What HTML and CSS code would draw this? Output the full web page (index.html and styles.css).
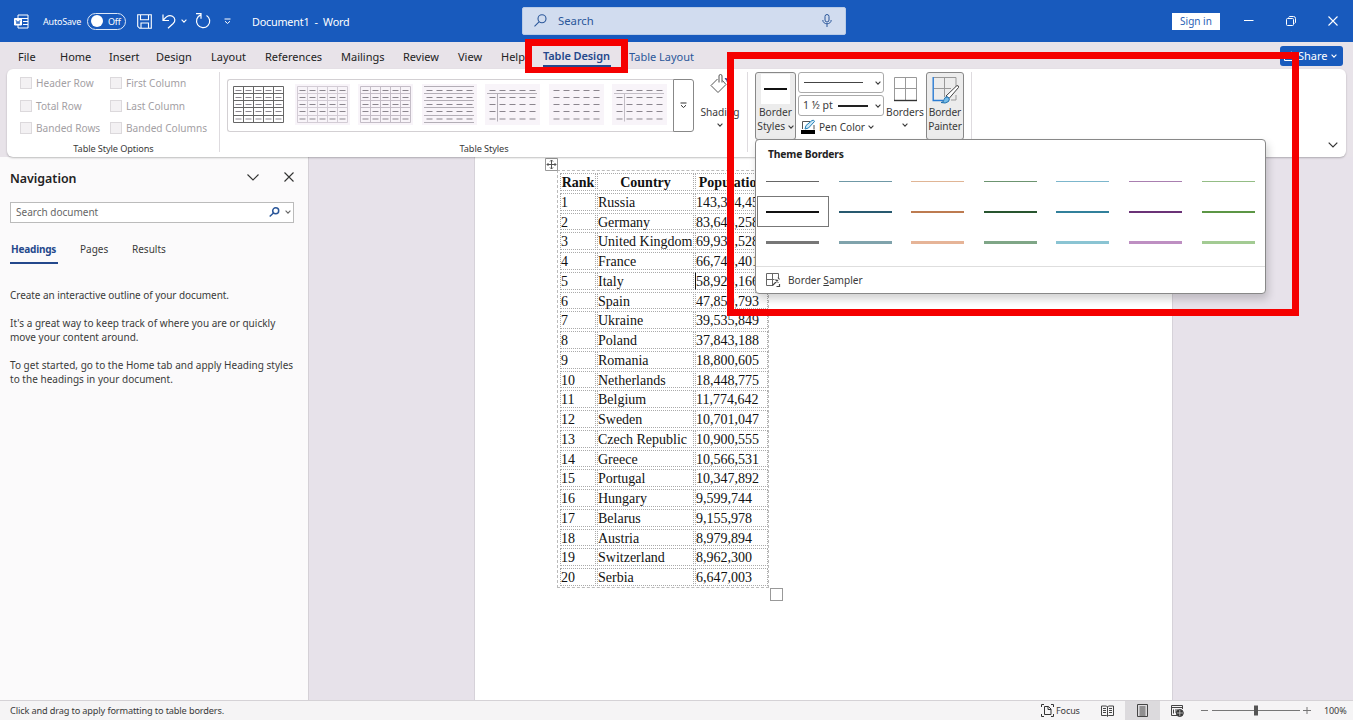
FILE: index.html
```html
<!DOCTYPE html>
<html lang="en">
<head>
  <meta charset="UTF-8" />
  <meta name="viewport" content="width=device-width, initial-scale=1" />
  <title>Document1 - Word</title>
  <link rel="stylesheet" href="styles.css">
</head>
<body>
  <!-- shared symbols -->
  <svg class="defs" width="0" height="0">
    <symbol id="chev" viewBox="0 0 6 4"><path d="M.6.7 3 3.1 5.4.7" fill="none" stroke="currentColor" stroke-width="1.1"/></symbol>
    <symbol id="dashes" viewBox="0 0 51 37">
      <path d="M2.5 4.5h46M2.5 11.5h46M2.5 18.5h46M2.5 25.5h46M2.5 33h46" fill="none" stroke="#8b868e" stroke-dasharray="6 4"/>
    </symbol>
    <symbol id="grid" viewBox="0 0 51 37">
      <path d="M.5.5h50v36H.5zM10.5.5v36M20.5.5v36M30.5.5v36M40.5.5v36M.5 7.5h50M.5 14.5h50M.5 21.5h50M.5 29.5h50" fill="none" stroke="currentColor"/>
    </symbol>
  </svg>

  <header class="titlebar">
    <svg class="word" width="15" height="15" viewBox="0 0 15 15" fill="none" stroke="#fff"><path d="M4 4V1h10v13H4v-3M4 4.5h10M9 7.5h5M9 10.5h5"/><path d="M.5 4.5h7V11h-7z" fill="#fff"/><path d="M2 6l1 4 1-3 1 3 1-4" stroke="#185abd" stroke-width=".8"/></svg>
    <span class="autosave">AutoSave</span>
    <span class="toggle"><i></i>Off</span>
    <svg class="save" width="15" height="15" viewBox="0 0 15 15" fill="none" stroke="#fff" stroke-width="1.1"><path d="M.7.7h13.6v13.6H2.7l-2-2zM3.5.7v5h8v-5M4 14V9h7.5v5"/></svg>
    <svg class="undo" width="14" height="15" viewBox="0 0 14 15" fill="none" stroke="#fff" stroke-width="1.2"><path d="M1 .5v6h6M1.3 6.2C4 2.5 7.5.8 10.500 2.300c3 1.600 3 5 .7 7.200L6 14.200"/></svg>
    <svg class="caret" width="6" height="4"><use href="#chev"/></svg>
    <svg class="redo" width="16" height="16" viewBox="0 0 16 16" fill="none" stroke="#fff" stroke-width="1.2"><path d="M1 .7h5v5M5.800 1.900a6.600 6.600 0 1 0 5.700.5"/></svg>
    <svg class="more" width="7" height="7" viewBox="0 0 7 7" fill="none" stroke="#fff"><path d="M.5 1h6M1 3.2l2.5 2.3L6 3.2"/></svg>
    <span class="doc-name">Document1&nbsp; -&nbsp; Word</span>
    <div class="search">
      <svg width="13" height="13" viewBox="0 0 13 13" fill="none" stroke="#2b579a" stroke-width="1.1"><circle cx="8" cy="4.8" r="4"/><path d="M5 7.8.5 12.3"/></svg>
      <span>Search</span>
      <svg class="mic" width="10" height="13" viewBox="0 0 10 13" fill="none" stroke="#2b579a"><rect x="3" y=".5" width="4" height="7.5" rx="2"/><path d="M.8 6c0 5 8.4 5 8.4 0M5 10v3"/></svg>
    </div>
    <button class="signin">Sign in</button>
    <svg class="win-min" width="10" height="10" viewBox="0 0 10 10"><path d="M0 4.5h9.5" stroke="#fff"/></svg>
    <svg class="win-max" width="10" height="10" viewBox="0 0 10 10" fill="none" stroke="#fff"><rect x=".5" y="2.5" width="7" height="7" rx="1"/><path d="M2.5 1.5Q3 .5 4 .5h3.5q2 0 2 2V6q0 1-1 1.5"/></svg>
    <svg class="win-close" width="10" height="10" viewBox="0 0 10 10"><path d="M.5.5l9 9M9.5.5l-9 9" stroke="#fff" stroke-width="1.1"/></svg>
  </header>

  <nav class="tabs">
    <a class="t-file">File</a>
    <a class="t-home">Home</a>
    <a class="t-insert">Insert</a>
    <a class="t-design">Design</a>
    <a class="t-layout">Layout</a>
    <a class="t-refs">References</a>
    <a class="t-mail">Mailings</a>
    <a class="t-review">Review</a>
    <a class="t-view">View</a>
    <a class="t-help">Help</a>
    <a class="t-td active">Table Design</a>
    <a class="t-tl contextual">Table Layout</a>
    <button class="share">
      <svg width="11" height="10" viewBox="0 0 11 10" fill="none" stroke="#fff"><path d="M3 3H.5v6.5h8V7M3 6.5Q4 3 7.5 3V.8L10.3 4 7.5 6.5V5"/></svg>
      <span>Share</span>
      <svg width="6" height="4"><use href="#chev"/></svg>
    </button>
  </nav>

  <section class="ribbon">
    <div class="group options">
      <div class="checks">
        <label><i></i>Header Row</label><label><i></i>First Column</label>
        <label><i></i>Total Row</label><label><i></i>Last Column</label>
        <label><i></i>Banded Rows</label><label><i></i>Banded Columns</label>
      </div>
      <div class="group-name">Table Style Options</div>
    </div>

    <div class="group styles">
      <div class="styles-row">
        <div class="gallery">
          <svg class="thumb dark" viewBox="0 0 51 37"><use href="#grid"/><use href="#dashes"/></svg>
          <svg class="thumb" viewBox="0 0 51 37"><use href="#grid"/><use href="#dashes"/></svg>
          <svg class="thumb mid" viewBox="0 0 51 37"><use href="#grid"/><use href="#dashes"/></svg>
          <svg class="thumb" viewBox="0 0 51 37"><path d="M0 .5h50M0 7.5h50M0 14.5h50M0 21.5h50M0 29.5h50M0 36.5h50" stroke="#b3aeb6"/><use href="#dashes"/></svg>
          <svg class="thumb" viewBox="0 0 51 37"><path d="M0 7.5h50M10.5 7.5v28" stroke="#b3aeb6"/><use href="#dashes"/></svg>
          <svg class="thumb" viewBox="0 0 51 37"><use href="#dashes"/></svg>
          <svg class="thumb" viewBox="0 0 51 37"><path d="M0 7.5h50M10.5 7.5v28" stroke="#c3bec6"/><use href="#dashes"/></svg>
        </div>
        <div class="gallery-more"><svg width="7" height="7" viewBox="0 0 7 7" fill="none" stroke="#333"><path d="M.5 1h6M1 3.2l2.5 2.3L6 3.2"/></svg></div>
        <div class="tool shading">
          <svg width="20" height="21" viewBox="0 0 20 21" fill="none" stroke="#555"><path d="M7.500 6 1 12.500l7 7 8-8-3.500-4M9 9.500V3Q9 1.500 10.500 1.500T12 3v6.500"/><path d="M15 6q2-1 2.500 3" stroke="#3a3a88" stroke-width="1.5"/></svg>
          <span>Shading</span>
          <svg width="6" height="4"><use href="#chev"/></svg>
        </div>
      </div>
      <div class="group-name">Table Styles</div>
    </div>

    <div class="group borders">
      <div class="tool pressed border-styles">
        <b class="preview"></b>
        <span>Border</span>
        <span>Styles <svg width="6" height="4"><use href="#chev"/></svg></span>
      </div>
      <div class="pen">
        <div class="combo"><hr class="thin"><svg width="6" height="4"><use href="#chev"/></svg></div>
        <div class="combo"><span>1 ½ pt</span><hr><svg width="6" height="4"><use href="#chev"/></svg></div>
        <div class="pen-color">
          <svg width="15" height="14" viewBox="0 0 15 14"><path d="M1.5 9V1.5H9M13 5v4.500" fill="none" stroke="#555"/><path d="M4 9l1-3.500L11 .5q2-1 2.500 1L7.500 8z" fill="#cfe8f6" stroke="#1e7fb8"/><path d="M0 10h14v4H0z"/></svg>
          <span>Pen Color</span>
          <svg width="6" height="4"><use href="#chev"/></svg>
        </div>
      </div>
      <div class="tool borders-btn">
        <svg width="25" height="26" viewBox="0 0 25 26" fill="none" stroke="#999"><path d="M1.500 24V1.500h22V24M12.500 1.500V24M1.500 12.500h22"/><path d="M1 24.500h23" stroke="#333" stroke-width="1.400"/></svg>
        <span>Borders</span>
        <svg width="6" height="4"><use href="#chev"/></svg>
      </div>
      <div class="tool pressed painter">
        <svg width="29" height="29" viewBox="0 0 29 29" fill="none" stroke="#999"><path d="M3 1.500h22V11M13.500 1.500V21M3 12.500h17M25 19v5h-5"/><path d="M2.200 1v23.500H12" stroke="#2b7cd3" stroke-width="1.400"/><path d="M15 20 26 9.500q2 0 1.500 2L18 22.500z" fill="#fff" stroke="#444"/><path d="M10 26.500q3 0 3-3 1-3.500 4-2.500 2.500 2 .5 4.500-3 2.500-7.500 1z" fill="#77bde8" stroke="#1e6fae"/></svg>
        <span>Border</span>
        <span>Painter</span>
      </div>
    </div>
    <svg class="collapse" width="10" height="6" viewBox="0 0 10 6"><path d="M.7.7 5 5 9.3.7" fill="none" stroke="#333" stroke-width="1.2"/></svg>
  </section>

  <main class="workspace">
    <aside class="navpane">
      <div class="nav-head">
        <h2>Navigation</h2>
        <svg width="12" height="7" viewBox="0 0 12 7"><path d="M.5.5 6 6 11.500.5" fill="none" stroke="#333" stroke-width="1.1"/></svg>
        <svg class="x" width="10" height="10" viewBox="0 0 10 10"><path d="M.5.5l9 9M9.5.5l-9 9" stroke="#333" stroke-width="1.1"/></svg>
      </div>
      <div class="nav-search">
        <span>Search document</span>
        <svg width="11" height="10" viewBox="0 0 11 10" fill="none" stroke="#2b579a" stroke-width="1.5"><circle cx="6.7" cy="3.8" r="3"/><path d="M4.5 6 .7 9.5"/></svg>
        <svg width="6" height="4"><use href="#chev"/></svg>
      </div>
      <div class="nav-tabs"><a class="on">Headings</a><a class="pages">Pages</a><a class="results">Results</a></div>
      <p class="p1">Create an interactive outline of your document.</p>
      <p class="p2">It's a great way to keep track of where you are or quickly<br>move your content around.</p>
      <p class="p3">To get started, go to the Home tab and apply Heading styles<br>to the headings in your document.</p>
    </aside>

    <article class="page">
      <div class="table-wrap">
        <svg class="move" width="13" height="13" viewBox="0 0 13 13" fill="none" stroke="#555"><path d="M.5.5h12v12H.5z" fill="#fff" stroke="#999"/><path d="M6.5 2v9M2 6.5h9M5 3.5 6.500 2 8 3.5M5 9.5 6.500 11 8 9.5M3.5 5 2 6.5 3.5 8M9.5 5 11 6.5 9.5 8"/></svg>
        <div class="doc-table" id="countries">
          <b>Rank</b><b>Country</b><b>Population</b>
        </div>
        <i class="resize"></i>
      </div>
    </article>
  </main>

  <footer class="status">
    <span class="hint">Click and drag to apply formatting to table borders.</span>
    <span class="focus">
      <svg width="13" height="13" viewBox="0 0 13 13" fill="none" stroke="#333"><path d="M3.5 2.5h4L10 5v5.500H3.5zM7 2.5v3h3M.5 3V.5H3M10 .5h2.500V3M.5 10v2.500H3M10 12.500h2.500V10"/></svg>
      Focus
    </span>
    <span class="view read"><svg width="13" height="12" viewBox="0 0 13 12" fill="none" stroke="#444"><path d="M.5 1h5l1 1 1-1h5v9.500h-5l-1 1-1-1h-5zM6.5 2v9M2 3.500h3M2 5.500h3M2 7.500h3M8 3.500h3M8 5.500h3M8 7.500h3"/></svg></span>
    <span class="view current"><svg width="11" height="13" viewBox="0 0 11 13" fill="none" stroke="#444"><path d="M.5.5h10v12H.5zM2.500 3h6M2.500 5h6M2.500 7h6M2.500 9h6M2.500 11h6"/></svg></span>
    <span class="view"><svg width="13" height="12" viewBox="0 0 13 12" fill="none" stroke="#444"><path d="M6 10.500H.5V.5h11V4M.5 2.500h11M2.500 4.500v4M4 5h3M4 7h2"/><circle cx="8.800" cy="8" r="3.500" fill="#333"/><path d="M8.800 5v6M6 8h6" stroke="#ddd" stroke-width=".7"/></svg></span>
    <svg class="zoom" width="110" height="11" viewBox="0 0 110 11"><path d="M0 5.500h7M11 5.500h88M102 5.500h8M106 2v7" stroke="#777"/><path d="M53 .5h4v10h-4z" fill="#555"/></svg>
    <span class="percent">100%</span>
  </footer>

  <!-- Border Styles drop-down -->
  <div class="menu">
    <h3>Theme Borders</h3>
    <div class="swatches" id="swatches"></div>
    <div class="sampler">
      <svg width="14" height="14" viewBox="0 0 14 14" fill="none" stroke="#666"><path d="M7 12.500H.5V.5h12V5M6.500.5v12M.5 6.500h8"/><path d="M6.500 12.500 12 7M9.500 6.500l3 3M12 4.500l1.500 2M10.500 13.500h3V11" stroke="#444" stroke-width="1.200"/></svg>
      <span>Border <u>S</u>ampler</span>
    </div>
  </div>

  <!-- callouts -->
  <div class="callout tab-callout"></div>
  <div class="callout menu-callout"></div>

  <script>
    const rows = [
      ['Russia', '143,394,458'], ['Germany', '83,645,258'], ['United Kingdom', '69,931,528'],
      ['France', '66,745,401'], ['Italy', '58,925,166'], ['Spain', '47,850,793'],
      ['Ukraine', '39,535,849'], ['Poland', '37,843,188'], ['Romania', '18,800,605'],
      ['Netherlands', '18,448,775'], ['Belgium', '11,774,642'], ['Sweden', '10,701,047'],
      ['Czech Republic', '10,900,555'], ['Greece', '10,566,531'], ['Portugal', '10,347,892'],
      ['Hungary', '9,599,744'], ['Belarus', '9,155,978'], ['Austria', '8,979,894'],
      ['Switzerland', '8,962,300'], ['Serbia', '6,647,003']
    ];
    const table = document.getElementById('countries');
    rows.forEach(([name, pop], i) => {
      [i + 1, name, pop].forEach(text => {
        const cell = document.createElement('span');
        cell.textContent = text;
        if (text === '58,925,166') cell.className = 'cursor';
        table.appendChild(cell);
      });
    });

    /* one array per line weight: thin, medium, thick */
    const colors = [
      ['#666', '#6f98a6', '#e0b595', '#6c9470', '#7cb6cc', '#a97fb0', '#94bd85'],
      ['#111', '#28596f', '#bd7b50', '#28552f', '#31809b', '#6b3277', '#5c9645'],
      ['#777', '#80a3ac', '#e6b497', '#7fa687', '#8ac4d3', '#be8fc2', '#a3cb93']
    ];
    const swatches = document.getElementById('swatches');
    colors.forEach((line, weight) => line.forEach((color, i) => {
      const item = document.createElement('div');
      item.className = 'swatch w' + (weight + 1) + (weight === 1 && i === 0 ? ' selected' : '');
      item.innerHTML = '<i style="background:' + color + '"></i>';
      swatches.appendChild(item);
    }));
  </script>
</body>
</html>
```
FILE: styles.css
```css
* { box-sizing: border-box; }

body {
  margin: 0;
  width: 1353px;
  height: 720px;
  overflow: hidden;
  position: relative;
  display: flex;
  flex-direction: column;
  font-family: "Noto Sans", "Open Sans", sans-serif;
  font-size: 10px;
  color: #3a3a3a;
  background: #e8e3e9;
}
svg { display: block; flex: none; overflow: visible; }
.defs { position: absolute; }
button { border: 0; padding: 0; font: inherit; }
span, a { white-space: nowrap; }
h2, h3, p { margin: 0; }

/* ---------- title bar ---------- */
.titlebar {
  flex: none;
  height: 42px;
  display: flex;
  align-items: center;
  color: #fff;
  background: #185abd;
}
.word { margin-left: 14px; }
.autosave { width: 38px; margin-left: 14px; font-size: 9px; letter-spacing: -.2px; }
.toggle {
  width: 39px;
  height: 17px;
  margin-left: 6px;
  padding-left: 3px;
  display: flex;
  align-items: center;
  gap: 5px;
  border: 1px solid #dce7f7;
  border-radius: 9px;
  font-size: 9px;
  letter-spacing: -.2px;
}
.toggle i { width: 12px; height: 12px; border-radius: 50%; background: #fff; }
.save { margin-left: 11px; }
.undo { margin-left: 10px; }
.caret { margin-left: 5px; }
.redo { margin-left: 8px; }
.more { margin-left: 13px; }
.doc-name { width: 97px; margin-left: 21px; font-size: 10.8px; letter-spacing: -.2px; }
.search {
  width: 324px;
  height: 28px;
  margin-left: 173px;
  padding: 0 13px 2px 11px;
  display: flex;
  align-items: center;
  gap: 11px;
  border-radius: 2px;
  border: 1px solid #b9cbe6;
  background: #d1dcef;
  color: #2b579a;
  font-size: 11.3px;
}
.mic { margin-left: auto; }
.signin {
  width: 48px;
  height: 17px;
  margin-left: 326px;
  background: #fff;
  color: #2a5fb5;
  font-size: 10px;
}
.win-min { margin-left: 24px; }
.win-max { margin-left: 32px; }
.win-close { margin-left: 32px; }

/* ---------- tabs ---------- */
.tabs {
  flex: none;
  height: 27px;
  display: flex;
  align-items: center;
  padding-top: 2px;
  font-size: 11px;
  color: #222;
  background: #e8e3e9;
}
.tabs a { flex: none; }
.t-file { width: 42px; margin-left: 18px; }
.t-home { width: 49px; }
.t-insert { width: 47px; }
.t-design { width: 55px; }
.t-layout { width: 54px; }
.t-refs { width: 76px; }
.t-mail { width: 62px; }
.t-review { width: 55px; }
.t-view { width: 43px; }
.t-help { width: 42px; }
.t-td { width: 68px; }
.t-tl { margin-left: 18px; }
.tabs .active {
  height: 21px;
  padding-top: 2px;
  font-weight: 600;
  letter-spacing: -.1px;
  color: #24488c;
  border-bottom: 2px solid #24488c;
}
.contextual { color: #2b579a; }
.share {
  width: 63px;
  height: 20px;
  margin: -2px 10px 0 auto;
  padding: 0 4px;
  display: flex;
  align-items: center;
  gap: 3px;
  border-radius: 3px;
  background: #185abd;
  color: #fff;
  font-size: 11px;
}

/* ---------- ribbon ---------- */
.ribbon {
  flex: none;
  position: relative;
  z-index: 1;
  height: 88px;
  margin: 0 7px;
  display: flex;
  border-radius: 6px;
  background: #fff;
  box-shadow: 0 1px 2px rgba(0,0,0,.25);
}
.group {
  position: relative;
  display: flex;
  flex-direction: column;
  justify-content: space-between;
  padding-bottom: 1px;
}
.group::after {
  content: "";
  position: absolute;
  right: 0;
  top: 3px;
  bottom: 5px;
  width: 1px;
  background: #dedbdf;
}
.group-name { text-align: center; font-size: 9.2px; line-height: 14px; letter-spacing: -.1px; }
.options { width: 213px; }
.checks {
  display: grid;
  grid-template-columns: 90px 1fr;
  grid-auto-rows: 22.5px;
  padding: 3px 0 0 13px;
  color: #a3a0a4;
  font-size: 10.1px;
}
.checks label { display: flex; align-items: center; gap: 4px; white-space: nowrap; }
.checks i { width: 12px; height: 12px; border: 1px solid #dcd9dc; background: #f3f1f3; }
.styles { width: 528px; }
.styles-row { display: flex; padding: 4px 0 0 7px; }
.gallery {
  width: 446px;
  height: 53px;
  margin-top: 6px;
  padding: 0 0 2px 3px;
  display: flex;
  align-items: center;
  gap: 8.5px;
  border: 1px solid #d3d0d3;
  border-right: 0;
  border-radius: 3px 0 0 3px;
}
.thumb { width: 55px; height: 41px; padding: 2px; color: #d3ccd5; background: #f8f4f9; }
.thumb.mid { color: #c4bdc7; }
.thumb.dark { color: #666; background: #fff; }
.gallery-more {
  width: 21px;
  height: 53px;
  margin-top: 6px;
  display: grid;
  place-items: center;
  border: 1px solid #888;
  border-radius: 0 3px 3px 0;
}
.tool {
  display: flex;
  flex-direction: column;
  align-items: center;
  font-size: 10.2px;
  line-height: 14px;
}
.shading { width: 52px; }
.shading span { margin: 11px 0 4px; }
.borders {
  width: 224px;
  flex-direction: row;
  justify-content: flex-start;
  align-items: flex-start;
  padding: 3px 0 0 7px;
}
.pressed {
  height: 68px;
  border: 1px solid #888;
  border-radius: 3px;
  background: #ececec;
}
.border-styles { width: 41px; padding-top: 1px; }
.border-styles span, .border-styles svg { display: inline-block; vertical-align: middle; }
.preview {
  width: 29px;
  height: 30px;
  margin-bottom: 1px;
  background: linear-gradient(#111, #111) center / 23px 2px no-repeat #fff;
}
.pen { width: 86px; margin: 0 0 0 2px; display: flex; flex-direction: column; gap: 2px; }
.combo {
  height: 21px;
  padding: 0 2px 0 4px;
  display: flex;
  align-items: center;
  border: 1px solid #aaa;
  border-radius: 3px;
  font-size: 10.5px;
}
.combo hr { width: 30px; height: 0; margin: 0 7px 0 auto; border: 0; border-top: 2px solid #222; }
.combo .thin { width: 59px; margin-right: 12px; border-top: 1px solid #444; }
.combo span { line-height: 16px; margin-top: -2px; }
.pen-color { display: flex; align-items: center; gap: 3px; height: 18px; padding-left: 3px; font-size: 10.1px; }
.borders-btn { width: 42px; padding-top: 4px; }
.borders-btn span { margin: 3px 0 4px; }
.painter { width: 38px; padding-top: 3px; }
.painter span { letter-spacing: -.1px; }
.collapse { margin: 73px 8px 0 auto; }

/* ---------- workspace ---------- */
.workspace { flex: 1; min-height: 0; display: flex; background: #e7e2ea; }
.navpane {
  width: 309px;
  padding: 12px 14px 0 10px;
  border-right: 1px solid #d4d0d6;
  background: #fbfafb;
}
.nav-head { height: 18px; display: flex; align-items: center; }
.nav-head h2 { flex: 1; font-size: 12.4px; font-weight: 600; color: #222; }
.nav-head svg { margin-top: -2px; }
.nav-head .x { margin-left: 25px; }
.nav-search {
  width: 284px;
  height: 21px;
  margin-top: 15px;
  padding: 0 2px 2px 5px;
  display: flex;
  align-items: center;
  gap: 5px;
  border: 1px solid #bbb;
  background: #fff;
  color: #666;
}
.nav-search span { flex: 1; }
.nav-tabs { display: flex; margin-top: 19px; height: 22px; }
.nav-tabs .on { width: 48px; padding-left: 1px; font-weight: 700; color: #24488c; border-bottom: 2px solid #24488c; letter-spacing: -.2px; }
.pages { margin-left: 22px; width: 52px; }
.navpane p { line-height: 14px; margin-bottom: 14px; white-space: nowrap; letter-spacing: .02px; }
.navpane .p1 { margin-top: 24px; letter-spacing: -.06px; }

.page {
  width: 699px;
  margin-left: 165px;
  padding: 13px 0 0 82px;
  border: 1px solid #d6d2d9;
  border-width: 0 1px;
  background: #fff;
}
.table-wrap { position: relative; width: 212px; }
.doc-table {
  display: grid;
  grid-template-columns: 36px 97px 73px;
  grid-auto-rows: 17.76px;
  gap: 2px 1px;
  padding: 2px 1px 1px 2px;
  border: 1px dashed #bbb;
  font: 14px/18px "Liberation Serif", serif;
  color: #111;
}
.doc-table > * { border: 1px dotted #aaa; line-height: 18px; white-space: nowrap; }
.doc-table b { text-align: center; }
.doc-table .cursor { border-left: 1px solid #111; }
.move { position: absolute; left: -12px; top: -12px; }
.resize { position: absolute; right: -14px; bottom: -13px; width: 13px; height: 13px; border: 1px solid #999; }

/* ---------- status bar ---------- */
.status {
  flex: none;
  height: 20px;
  display: flex;
  align-items: center;
  border-top: 1px solid #d5d2d6;
  background: #f5f4f5;
  font-size: 9.2px;
}
.hint { width: 1031px; padding-left: 10px; letter-spacing: -.14px; }
.focus { width: 59px; height: 19px; margin-left: 10px; display: flex; align-items: center; gap: 2px; font-size: 9px; letter-spacing: -.1px; }
.view { width: 35px; height: 19px; display: grid; place-items: center; }
.read { margin-left: -10px; }
.current { background: #dcdadd; }
.zoom { margin-left: 6px; }
.percent { margin-left: 13px; font-size: 9px; letter-spacing: -.1px; }

/* ---------- drop-down ---------- */
.menu {
  position: absolute;
  z-index: 2;
  left: 755px;
  top: 139px;
  width: 511px;
  height: 155px;
  border: 1px solid #888;
  border-radius: 4px;
  background: #fff;
  box-shadow: 2px 5px 9px rgba(0,0,0,.18);
}
.menu h3 { padding: 7px 0 0 12px; font-size: 10.3px; line-height: 15px; font-weight: 700; color: #222; letter-spacing: -.15px; }
.swatches {
  display: grid;
  grid-template-columns: repeat(7, 72.6px);
  grid-template-rows: 30px 31px 30px;
  margin-top: 4px;
}
.swatch { display: grid; align-items: center; padding-left: 10px; }
.swatch i { width: 53px; }
.w1 i { height: 1px; }
.w2 i { height: 2px; }
.w3 i { height: 3px; }
.swatch.selected { border: 1px solid #777; margin-left: 1px; padding-left: 8px; }
.sampler {
  display: flex;
  align-items: center;
  gap: 8px;
  height: 26px;
  margin-top: 9px;
  padding-left: 10px;
  border-top: 1px solid #dedede;
  font-size: 10.1px;
}

/* ---------- callouts ---------- */
.callout { position: absolute; z-index: 3; border: 7px solid #f50000; }
.tab-callout { left: 525px; top: 39px; width: 103px; height: 34px; border-width: 7px 7px 6px; }
.menu-callout { left: 727px; top: 52px; width: 572px; height: 264px; }
```
